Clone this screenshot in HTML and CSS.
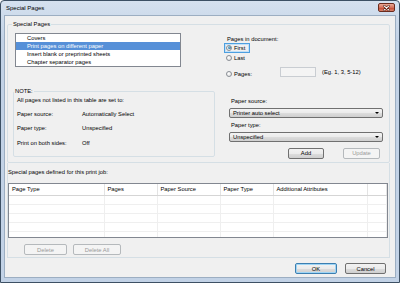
FILE: index.html
```html
<!DOCTYPE html>
<html lang="en">
<head>
    <meta charset="UTF-8">
    <title>Special Pages</title>
    <link rel="stylesheet" href="styles.css">
</head>
<body>

    <div class="window">
        <div class="titlebar">
            <span class="title">Special Pages</span>
            <span class="close-btn">
                <svg width="7" height="6" viewBox="0 0 7 6">
                    <path d="M1 0.8 L6 5.2 M6 0.8 L1 5.2" stroke="#5a2418" stroke-width="2.2" stroke-linecap="round"/>
                    <path d="M1 0.8 L6 5.2 M6 0.8 L1 5.2" stroke="#ffffff" stroke-width="1.1" stroke-linecap="round"/>
                </svg>
            </span>
        </div>

        <div class="client">
            <!-- Top group: page types + options -->
            <fieldset class="group main-group">
                <legend>Special Pages</legend>
                <div class="group-body">
                    <div class="left-col">
                        <ul class="listbox">
                            <li>Covers</li>
                            <li class="selected">Print pages on different paper</li>
                            <li>Insert blank or preprinted sheets</li>
                            <li>Chapter separator pages</li>
                        </ul>

                        <fieldset class="group note">
                            <legend>NOTE:</legend>
                            <p class="note-intro">All pages not listed in this table are set to:</p>
                            <div class="note-row"><span class="note-key">Paper source:</span><span>Automatically Select</span></div>
                            <div class="note-row"><span class="note-key">Paper type:</span><span>Unspecified</span></div>
                            <div class="note-row"><span class="note-key">Print on both sides:</span><span>Off</span></div>
                        </fieldset>
                    </div>

                    <div class="right-col">
                        <div class="field-label">Pages in document:</div>
                        <div class="radio-row focused"><span class="radio checked"></span>First</div>
                        <div class="radio-row"><span class="radio"></span>Last</div>
                        <div class="pages-row">
                            <div class="radio-row wide"><span class="radio"></span>Pages:</div>
                            <span class="textbox"></span>
                            <span class="hint">(Eg. 1, 3, 5-12)</span>
                        </div>

                        <div class="field-label indent source-label">Paper source:</div>
                        <div class="combo">Printer auto select<span class="arrow"></span></div>
                        <div class="field-label indent type-label">Paper type:</div>
                        <div class="combo">Unspecified<span class="arrow"></span></div>

                        <div class="action-row">
                            <button class="btn add-btn">Add</button>
                            <button class="btn update-btn" disabled>Update</button>
                        </div>
                    </div>
                </div>
            </fieldset>

            <!-- Defined special pages -->
            <div class="jobs">
                <div class="jobs-label">Special pages defined for this print job:</div>
                <div class="table-wrap">
                    <table class="jobs-table">
                        <colgroup>
                            <col style="width:95px">
                            <col style="width:53px">
                            <col style="width:63px">
                            <col style="width:53px">
                            <col style="width:94px">
                            <col>
                        </colgroup>
                        <thead>
                            <tr><th>Page Type</th><th>Pages</th><th>Paper Source</th><th>Paper Type</th><th>Additional Attributes</th><th></th></tr>
                        </thead>
                        <tbody>
                            <tr><td></td><td></td><td></td><td></td><td></td><td></td></tr>
                            <tr><td></td><td></td><td></td><td></td><td></td><td></td></tr>
                            <tr><td></td><td></td><td></td><td></td><td></td><td></td></tr>
                            <tr><td></td><td></td><td></td><td></td><td></td><td></td></tr>
                            <tr><td></td><td></td><td></td><td></td><td></td><td></td></tr>
                        </tbody>
                    </table>
                </div>
                <div class="delete-row">
                    <button class="btn delete-btn" disabled>Delete</button>
                    <button class="btn delete-all-btn" disabled>Delete All</button>
                </div>
            </div>

            <div class="dialog-buttons">
                <button class="btn ok-btn">OK</button>
                <button class="btn cancel-btn">Cancel</button>
            </div>
        </div>
    </div>

</body>
</html>
```

FILE: styles.css
```css
* {
    box-sizing: border-box;
}

body {
    margin: 0;
    font-family: "Liberation Sans", Arial, sans-serif;
    font-size: 5.8px;
    color: #000;
    background: #ffffff;
}

/* Window frame */
.window {
    width: 400px;
    height: 283px;
    border: 1px solid #3d5064;
    border-radius: 4px 4px 0 0;
    background: linear-gradient(#d5e1ef, #c2d2e6 40px, #c2d2e6);
    display: flex;
    flex-direction: column;
}

.titlebar {
    height: 14px;
    flex: none;
    display: flex;
    justify-content: space-between;
    align-items: flex-start;
    padding: 0 4px 0 5px;
}

.title {
    font-size: 6px;
    line-height: 15px;
}

.close-btn {
    width: 17px;
    height: 9px;
    margin-top: 2px;
    border: 1px solid #6b2b1d;
    border-radius: 2px;
    background: linear-gradient(#eba996, #d4705a 50%, #c2452c 51%, #d9806a);
    display: flex;
    align-items: center;
    justify-content: center;
}

.client {
    flex: 1;
    margin: 0 3px 4px;
    background: #f0f0f0;
    border: 1px solid #9caec2;
    display: flex;
    flex-direction: column;
}

/* Group boxes */
.group {
    border: 1px solid #d5dfe5;
    border-radius: 2px;
    margin: 0;
    padding: 0;
    min-width: 0;
}

.group legend {
    padding: 0 1px;
    line-height: 7px;
}

.main-group {
    margin: 5px 0 0 2px;
    width: 383px;
    padding: 5px 4px 3px 7px;
}

.main-group legend {
    margin-left: -3px;
}

.group-body {
    display: flex;
    gap: 9px;
}

.left-col {
    width: 200px;
}

.listbox {
    list-style: none;
    margin: 0;
    padding: 0;
    width: 166px;
    height: 34px;
    border: 1px solid #828790;
    background: #fff;
}

.listbox li {
    line-height: 8px;
    padding-left: 11px;
}

.listbox li.selected {
    background: #5690d8;
    color: #fff;
}

.note {
    margin: 21px 0 0 -2px;
    width: 202px;
    padding: 0 3px 6px 3px;
}

.note-intro {
    margin: 1.5px 0 3px;
    line-height: 7px;
}

.note-row {
    display: flex;
    align-items: center;
    height: 14.5px;
}

.note-key {
    width: 65px;
}

/* Right column */
.right-col {
    width: 160px;
    padding-top: 2.5px;
}

.field-label {
    line-height: 7px;
    padding-left: 3px;
}

.field-label.indent {
    padding-left: 7px;
}

.source-label {
    margin-top: 19.5px;
}

.type-label {
    margin-top: 4.5px;
}

.radio-row {
    display: flex;
    align-items: center;
    gap: 2px;
    width: 26px;
    height: 10px;
    padding-left: 1px;
    border: 1px solid transparent;
}

.radio-row:first-of-type {
    margin-top: 4px;
}

.radio-row.focused {
    border-color: #4c9fe0;
    box-shadow: inset 0 0 0 1px #c2e0f7;
}

.radio-row.wide {
    width: 56px;
}

.radio {
    width: 6px;
    height: 6px;
    border-radius: 50%;
    border: 1px solid #8a8f96;
    background: radial-gradient(circle at 40% 35%, #ffffff, #dcdcdc);
    display: flex;
    align-items: center;
    justify-content: center;
}

.radio.checked::after {
    content: "";
    width: 3px;
    height: 3px;
    border-radius: 50%;
    background: radial-gradient(circle at 40% 35%, #7fc0e0, #1e5a7c);
}

.pages-row {
    display: flex;
    align-items: center;
    margin-top: 2px;
}

.textbox {
    width: 36px;
    height: 10px;
    border: 1px solid #c9cdd2;
    background: #f4f4f4;
}

.hint {
    margin-left: 6px;
}

.combo {
    position: relative;
    margin: 2.5px 0 0 5px;
    width: 154px;
    height: 10px;
    line-height: 8px;
    padding-left: 3px;
    border: 1px solid #707070;
    border-radius: 2px;
    background: linear-gradient(#f3f3f3, #ebebeb 50%, #dddddd 51%, #cfcfcf);
}

.arrow {
    position: absolute;
    right: 3px;
    top: 3px;
    border-left: 2px solid transparent;
    border-right: 2px solid transparent;
    border-top: 2.5px solid #000;
}

.action-row {
    display: flex;
    margin-top: 6px;
}

/* Buttons */
.btn {
    font-family: inherit;
    font-size: 5.8px;
    color: #000;
    height: 11px;
    padding: 0;
    border: 1px solid #707070;
    border-radius: 2px;
    background: linear-gradient(#f2f2f2, #ebebeb 50%, #dddddd 51%, #cfcfcf);
}

.btn:disabled {
    color: #9a9a9a;
    border-color: #b5b9bc;
    background: #f4f4f4;
}

.add-btn {
    margin-left: 64px;
    width: 36px;
}

.update-btn {
    margin-left: 19px;
    width: 37px;
}

/* Jobs table section */
.jobs {
    margin-left: 2px;
    width: 383px;
    border: 1px solid #d5dfe5;
    border-top: none;
    padding: 6px 0 2px 0;
}

.jobs-label {
    line-height: 7px;
}

.table-wrap {
    margin-top: 7.5px;
    width: 380px;
    height: 55px;
    border: 1px solid #828790;
    background: #fff;
    overflow: hidden;
}

.jobs-table {
    width: 100%;
    table-layout: fixed;
    border-collapse: collapse;
}

.jobs-table th {
    height: 11px;
    padding: 0 0 0 3px;
    font-weight: normal;
    text-align: left;
    border-right: 1px solid #e3e3e3;
    border-bottom: 1px solid #d5d5d5;
}

.jobs-table td {
    height: 9px;
    padding: 0;
    border-right: 1px solid #efefef;
    border-bottom: 1px solid #efefef;
}

.delete-row {
    display: flex;
    margin-top: 6px;
}

.delete-btn {
    margin-left: 16px;
    width: 43px;
}

.delete-all-btn {
    margin-left: 6px;
    width: 48px;
}

.dialog-buttons {
    display: flex;
    justify-content: flex-end;
    gap: 8px;
    margin-top: 5px;
    padding-right: 9px;
}

.ok-btn {
    width: 42px;
    border-color: #3c7fb1;
    box-shadow: inset 0 0 0 1px #9fd5f5;
}

.cancel-btn {
    width: 41px;
}
```
